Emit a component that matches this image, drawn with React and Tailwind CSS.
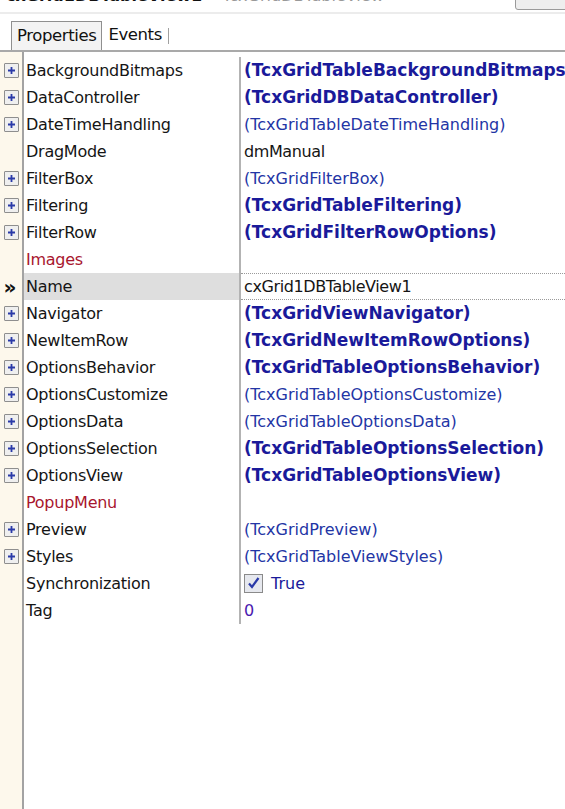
import React from "react";

const rows = [
  { n: "BackgroundBitmaps", v: "(TcxGridTableBackgroundBitmaps)", e: true, b: true },
  { n: "DataController", v: "(TcxGridDBDataController)", e: true, b: true },
  { n: "DateTimeHandling", v: "(TcxGridTableDateTimeHandling)", e: true },
  { n: "DragMode", v: "dmManual", plain: true },
  { n: "FilterBox", v: "(TcxGridFilterBox)", e: true },
  { n: "Filtering", v: "(TcxGridTableFiltering)", e: true, b: true },
  { n: "FilterRow", v: "(TcxGridFilterRowOptions)", e: true, b: true },
  { n: "Images", v: "", red: true },
  { n: "Name", v: "cxGrid1DBTableView1", sel: true, plain: true },
  { n: "Navigator", v: "(TcxGridViewNavigator)", e: true, b: true },
  { n: "NewItemRow", v: "(TcxGridNewItemRowOptions)", e: true, b: true },
  { n: "OptionsBehavior", v: "(TcxGridTableOptionsBehavior)", e: true, b: true },
  { n: "OptionsCustomize", v: "(TcxGridTableOptionsCustomize)", e: true },
  { n: "OptionsData", v: "(TcxGridTableOptionsData)", e: true },
  { n: "OptionsSelection", v: "(TcxGridTableOptionsSelection)", e: true, b: true },
  { n: "OptionsView", v: "(TcxGridTableOptionsView)", e: true, b: true },
  { n: "PopupMenu", v: "", red: true },
  { n: "Preview", v: "(TcxGridPreview)", e: true },
  { n: "Styles", v: "(TcxGridTableViewStyles)", e: true },
  { n: "Synchronization", v: "True", check: true },
  { n: "Tag", v: "0", tag: true },
];

function Plus() {
  return (
    <div className="w-[15px] h-[15px] border border-[#8e8e8e] bg-[#efefef] rounded-[1px] flex items-center justify-center">
      <svg width="11" height="11" viewBox="0 0 11 11">
        <path d="M2 5.5h7M5.5 2v7" stroke="#2a3aa8" strokeWidth="1.8" />
      </svg>
    </div>
  );
}

function Check() {
  return (
    <div className="w-[19px] h-[19px] border border-[#8a8a8a] bg-[#e6e8ee] flex items-center justify-center mr-[8px]">
      <svg width="15" height="15" viewBox="0 0 15 15">
        <path d="M3 7.5l3 3.5 6.5-9" fill="none" stroke="#2a3aa8" strokeWidth="2.2" />
      </svg>
    </div>
  );
}

export default function App() {
  return (
    <div
      className="w-[565px] h-[809px] bg-white overflow-hidden flex flex-col text-[16px] relative"
      style={{ fontFamily: '"DejaVu Sans", Verdana, sans-serif' }}
    >
      {/* clipped header */}
      <div className="h-[12px] overflow-hidden relative shrink-0">
        <div className="absolute top-[-16px] left-[6px] flex items-baseline gap-[20px] whitespace-nowrap">
          <span className="font-bold text-[#111]">cxGrid1DBTableView1</span>
          <span className="text-[#999]">TcxGridDBTableView</span>
        </div>
        <div className="absolute right-[-6px] top-[-10px] w-[56px] h-[20px] border border-[#9a9a9a] rounded-[3px] bg-[#eeeeee]" />
      </div>
      <div className="h-[2px] bg-[#ececec] shrink-0" />
      {/* tabs */}
      <div className="h-[38px] shrink-0 flex items-end pl-[11px] border-b-2 border-[#a9a9a9]">
        <div className="h-[29px] px-[5px] border border-b-0 border-[#8f8f8f] bg-[#f3f3f3] flex items-center text-[16.5px] text-[#111] tracking-[-0.4px]">
          Properties
        </div>
        <div className="h-[29px] pl-[6px] flex items-center text-[16.5px] text-[#111] tracking-[-0.4px]">
          Events
          <div className="w-[1px] h-[16px] bg-[#a0a0a0] ml-[6px]" />
        </div>
      </div>
      {/* grid */}
      <div className="flex-1 flex">
        <div className="w-[22px] bg-[#fdf8ec] shrink-0 pt-[5px]">
          {rows.map((r) => (
            <div key={r.n} className="h-[27px] flex items-center justify-center">
              {r.e && <Plus />}
              {r.sel && (
                <span className="text-[20px] font-bold text-[#111] ml-[-2px] leading-none">{"\u00bb"}</span>
              )}
            </div>
          ))}
        </div>
        <div className="w-[2px] bg-[#a3a3a3] shrink-0" />
        <div className="flex-1 pt-[5px]">
          {rows.map((r) => (
            <div key={r.n} className="h-[27px] flex">
              <div
                className={
                  "w-[215px] shrink-0 flex items-center pl-[2px] tracking-[-0.25px] " +
                  (r.sel ? "bg-[#dedede] " : "") +
                  (r.red ? "text-[#a8162e]" : "text-[#151515]")
                }
              >
                {r.n}
              </div>
              <div className="w-[2px] bg-[#b3b3b3] shrink-0" />
              <div
                className={
                  "flex-1 flex items-center pl-[3px] whitespace-nowrap overflow-hidden " +
                  (r.sel ? "border-y border-dotted border-[#9a9a9a] " : "") +
                  (r.b ? "font-bold text-[17px] text-[#1a1a9a] " : "") +
                  (r.plain ? "text-[#151515] tracking-[-0.4px] " : r.tag ? "text-[#4a1ab0] " : r.b ? "" : "text-[#2335a5] ")
                }
              >
                {r.check && <Check />}
                {r.check ? <span className="text-[#1a1a9a]">{r.v}</span> : r.v}
              </div>
            </div>
          ))}
        </div>
      </div>
    </div>
  );
}
